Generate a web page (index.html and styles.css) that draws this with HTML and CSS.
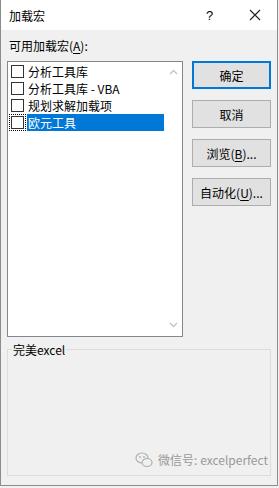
FILE: index.html
```html
<!DOCTYPE html>
<html>
<head>
<meta charset="utf-8">
<link rel="stylesheet" href="styles.css">
</head>
<body>
<div class="dialog">
  <div class="titlebar">
    <span class="title">加载宏</span>
    <span class="help">?</span>
    <span class="close">
      <svg width="12" height="12" viewBox="0 0 12 12"><path d="M1 1L11 11M11 1L1 11" stroke="#222" stroke-width="1.1" fill="none"/></svg>
    </span>
  </div>
  <div class="content">
    <div class="label">可用加载宏(<u>A</u>):</div>
    <div class="main">
      <div class="listbox">
        <div class="items">
          <div class="item"><span class="cb"></span><span class="txt">分析工具库</span></div>
          <div class="item"><span class="cb"></span><span class="txt">分析工具库 - VBA</span></div>
          <div class="item"><span class="cb"></span><span class="txt">规划求解加载项</span></div>
          <div class="item sel"><span class="focus"><span class="cb"></span></span><span class="txt">欧元工具</span></div>
        </div>
        <div class="scroll">
          <svg width="9" height="6" viewBox="0 0 9 6"><path d="M1 5L4.5 1.5L8 5" stroke="#c4c4c4" stroke-width="1.4" fill="none"/></svg>
          <svg width="9" height="6" viewBox="0 0 9 6"><path d="M1 1L4.5 4.5L8 1" stroke="#c4c4c4" stroke-width="1.4" fill="none"/></svg>
        </div>
      </div>
      <div class="buttons">
        <div class="btn default">确定</div>
        <div class="btn">取消</div>
        <div class="btn">浏览(<u>B</u>)...</div>
        <div class="btn">自动化(<u>U</u>)...</div>
      </div>
    </div>
    <div class="group">
      <span class="caption">完美excel</span>
      <div class="watermark">
        <svg width="18" height="16" viewBox="0 0 18 16"><ellipse cx="7" cy="6" rx="6" ry="5" fill="none" stroke="#b0b0b0" stroke-width="1.2"/><ellipse cx="12" cy="10.5" rx="5" ry="4" fill="#f0f0f0" stroke="#b0b0b0" stroke-width="1.2"/><circle cx="5" cy="5" r="0.9" fill="#b0b0b0"/><circle cx="9" cy="5" r="0.9" fill="#b0b0b0"/></svg>
        <span>微信号: excelperfect</span>
      </div>
    </div>
  </div>
</div>
</body>
</html>
```
FILE: styles.css
```css
html, body {
  margin: 0;
  padding: 0;
  width: 279px;
  height: 488px;
  background: #f0f0f0;
  overflow: hidden;
  font-family: "Noto Sans CJK SC", "Noto Sans", sans-serif;
  font-size: 12px;
  color: #000;
}
.dialog {
  box-sizing: border-box;
  width: 278px;
  height: 486px;
  border: 1px solid #8c8c8c;
  border-top: none;
  background: #f0f0f0;
  display: flex;
  flex-direction: column;
}
.titlebar {
  height: 30px;
  background: #fff;
  display: flex;
  align-items: center;
  flex-shrink: 0;
}
.title {
  margin-left: 8px;
  flex: 1;
  font-size: 12px;
}
.help {
  font-family: "Liberation Sans", sans-serif;
  font-size: 13px;
  width: 12px;
  margin-right: 31px;
}
.close {
  display: flex;
  margin-right: 16px;
}
.content {
  padding: 9px 0 0 6px;
  display: flex;
  flex-direction: column;
}
.label {
  height: 14px;
  line-height: 14px;
  margin-left: 2px;
}
.label u, .btn u { text-underline-offset: 2px; }
.main {
  display: flex;
  margin-top: 8px;
}
.listbox {
  box-sizing: border-box;
  width: 176px;
  height: 276px;
  background: #fff;
  border: 1px solid #828790;
  display: flex;
}
.items {
  flex: 1;
  padding-top: 1px;
}
.item {
  height: 17px;
  display: flex;
  align-items: center;
  padding-left: 3px;
}
.cb {
  box-sizing: border-box;
  width: 13px;
  height: 13px;
  border: 1px solid #333;
  background: #fff;
  display: block;
}
.txt {
  margin-left: 3px;
  height: 17px;
  line-height: 17px;
  padding-left: 1px;
  padding-right: 2px;
}
.sel .txt {
  background: #0078d7;
  color: #fff;
  flex: 1;
}
.focus {
  outline: 1px dotted #000;
  outline-offset: 1px;
  display: block;
}
.scroll {
  width: 18px;
  display: flex;
  flex-direction: column;
  justify-content: space-between;
  align-items: center;
  padding: 7px 0 8px;
}
.buttons {
  display: flex;
  flex-direction: column;
  gap: 11px;
  margin-left: 9px;
}
.btn {
  box-sizing: border-box;
  width: 79px;
  height: 28px;
  background: #e1e1e1;
  border: 1px solid #adadad;
  display: flex;
  align-items: center;
  justify-content: center;
}
.btn.default {
  border: 2px solid #0078d7;
}
.group {
  position: relative;
  box-sizing: border-box;
  margin-top: 12px;
  width: 264px;
  height: 127px;
  border: 1px solid #dcdcdc;
}
.caption {
  position: absolute;
  left: 4px;
  top: -8px;
  background: #f0f0f0;
  padding: 0 1px;
  line-height: 16px;
}
.watermark {
  position: absolute;
  right: 2px;
  bottom: 7px;
  display: flex;
  align-items: center;
  gap: 5px;
  color: #9a9a9a;
  font-size: 12px;
}
```
